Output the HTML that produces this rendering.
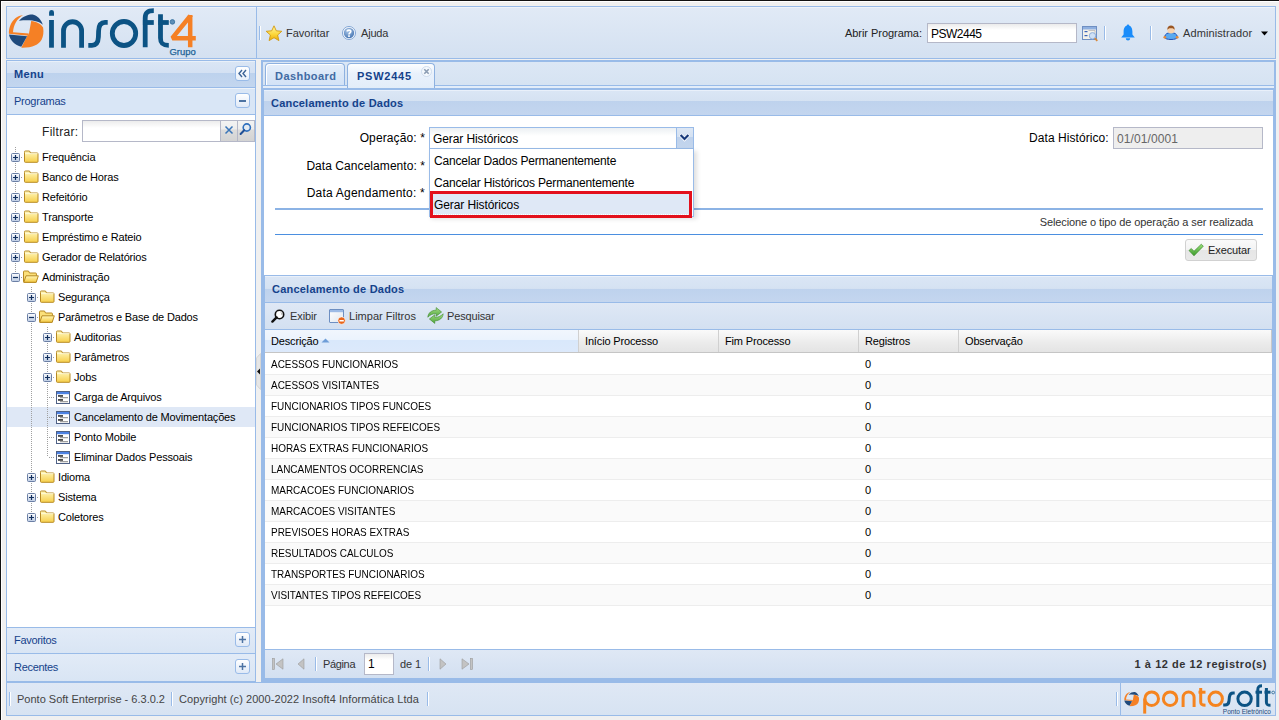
<!DOCTYPE html>
<html><head><meta charset="utf-8">
<style>
*{box-sizing:border-box;margin:0;padding:0}
html,body{width:1279px;height:720px;overflow:hidden;background:#f0f0f0;font-family:"Liberation Sans",sans-serif;font-size:11px;color:#000}
.a{position:absolute}
.t{position:absolute;white-space:nowrap;line-height:1}
.b{font-weight:bold}
#frameTop{left:0;top:0;width:1279px;height:1px;background:#111}
#frameTop2{left:0;top:1px;width:1279px;height:1px;background:#fff}
#frameLeft{left:0;top:0;width:1px;height:720px;background:#111}
#frameLeft2{left:1px;top:1px;width:1px;height:719px;background:#fff}
.hdr{left:6px;top:6px;width:1270px;height:53px;border:1px solid #99bbe8;background:linear-gradient(#e1eaf6,#d4e1f1);box-shadow:inset 0 1px 0 #eef3fa}
.sep{position:absolute;width:1px;background:#99bbe8;border-right:1px solid #fff}
</style></head><body>
<div class="a" id="frameTop"></div><div class="a" id="frameTop2"></div>
<div class="a" id="frameLeft"></div><div class="a" id="frameLeft2"></div>

<!-- HEADER -->
<div class="a hdr"></div>
<div class="a" style="left:256px;top:7px;width:1px;height:51px;background:#99bbe8"></div>
<svg class="a" style="left:6px;top:10px" width="42" height="42" viewBox="0 0 720 720">
<path fill="#1f4a7c" d="M222,185 C300,95 420,70 470,80 C540,95 600,160 632,252 C560,195 450,162 222,185 Z"/>
<path fill="#f58025" d="M432,188 C520,200 590,225 636,300 C650,380 640,450 610,510 C560,600 450,650 262,646 L360,450 L392,412 Z"/>
<path fill="#f58025" d="M292,90 C190,140 128,260 120,382 L392,402 L385,440 L50,408 C45,300 90,200 160,140 C200,110 250,92 292,90 Z"/>
<path fill="#1f4a7c" d="M52,420 L362,452 L262,632 C150,605 70,520 52,420 Z"/>
</svg>
<svg class="a" style="left:0;top:0" width="210" height="60" viewBox="0 0 210 60">
<g fill="none" stroke="#0c5384" stroke-width="4.8">
<path d="M51.5,20 V47.7"/>
<path d="M63.5,47.7 V30.8 A9.05,9.05 0 0 1 81.6,30.8 V47.7"/>
<path d="M107.7,22.4 H105 C100,22.4 98.8,26 98.6,31 L98.4,37 C98.2,42 96.5,45.3 92,45.3 H88.3"/>
<ellipse cx="124" cy="33.5" rx="11.7" ry="12"/>
<path d="M145.2,47.3 V18 C145.2,12 148,10.7 153.8,10.7"/>
<path d="M142.9,22.5 H153.8"/>
<path d="M160.5,14.3 V38 C160.5,43.5 162.5,45.3 168.8,45.3"/>
<path d="M158.3,22.5 H168.8"/>
</g>
<path fill="#0c5384" d="M49.1,12.5 A2.45,2.45 0 0 1 54,12.5 V15.7 H49.1 Z"/>
<g fill="none" stroke="#f58025" stroke-width="4.5" stroke-linejoin="bevel">
<path d="M190.2,47.3 V16 L172.3,38.2 H195.8"/><path d="M187.9,15 H192.5 V17 L188,17 Z" fill="#f58025" stroke="none"/>
</g>
<circle cx="172.4" cy="21.9" r="2.3" fill="#5d8fb8" stroke="#2f6c9c" stroke-width="0.8"/>
<text x="169.5" y="55" font-family="Liberation Sans" font-size="9" fill="#1f6496" stroke="#1f6496" stroke-width="0.25" textLength="26.3" lengthAdjust="spacingAndGlyphs">Grupo</text>
</svg>
<div class="a" style="left:259px;top:26px;width:2px;height:14px;border-left:1px solid #99bbe8;border-right:1px solid #fff"></div>
<svg class="a" style="left:265px;top:25px" width="18" height="17" viewBox="0 0 18 17">
<defs><linearGradient id="sg" x1="0" y1="0" x2="0" y2="1"><stop offset="0" stop-color="#fff7a8"/><stop offset="0.6" stop-color="#fcd535"/><stop offset="1" stop-color="#eaa80e"/></linearGradient></defs>
<path d="M9,0.8 L11.3,5.8 L16.8,6.3 L12.6,10 L13.9,15.6 L9,12.7 L4.1,15.6 L5.4,10 L1.2,6.3 L6.7,5.8 Z" fill="url(#sg)" stroke="#d39a10" stroke-width="0.9" stroke-linejoin="round"/>
</svg>
<div class="t" style="left:286px;top:28px;color:#333;font-size:11px;letter-spacing:0px">Favoritar</div>
<svg class="a" style="left:342px;top:26px" width="14" height="14" viewBox="0 0 14 14">
<defs><radialGradient id="hg" cx="0.4" cy="0.3" r="0.8"><stop offset="0" stop-color="#a9c6e8"/><stop offset="1" stop-color="#3f6fae"/></radialGradient></defs>
<circle cx="7" cy="7" r="6.5" fill="#fff" stroke="#7fa3d3" stroke-width="1"/>
<circle cx="7" cy="7" r="5.2" fill="url(#hg)"/>
<path d="M5.2,5.6 C5.2,3.6 8.8,3.6 8.8,5.6 C8.8,6.9 7,6.9 7,8.4" fill="none" stroke="#fff" stroke-width="1.6"/>
<rect x="6.1" y="9.3" width="1.8" height="1.6" fill="#fff"/>
</svg>
<div class="t" style="left:361px;top:28px;color:#333;font-size:11px;letter-spacing:-0.2px">Ajuda</div>

<div class="t" style="left:845px;top:28px;color:#222;font-size:11px;letter-spacing:-0.05px">Abrir Programa:</div>
<div class="a" style="left:927px;top:23px;width:150px;height:20px;border:1px solid #b5b8c8;background:#fff;background-image:linear-gradient(#ebebeb,#fff 6px)"></div>
<div class="t" style="left:931px;top:28px;color:#000;font-size:12px;letter-spacing:-0.5px">PSW2445</div>
<svg class="a" style="left:1082px;top:26px" width="17" height="16" viewBox="0 0 17 16">
<rect x="0.5" y="0.5" width="14" height="13" fill="#f4f1ea" stroke="#6f8fc2"/>
<rect x="1" y="1" width="13" height="2.5" fill="#8fb0e0"/>
<rect x="2.5" y="5" width="3" height="1.2" fill="#3a63b8"/><rect x="2.5" y="9" width="3" height="1.2" fill="#3a63b8"/>
<path d="M6.5,4.5 H13 V13" fill="none" stroke="#b9b9b9" stroke-width="0.8"/>
<circle cx="10.5" cy="9.8" r="3.2" fill="#cfe0f5" stroke="#8fb0dc" stroke-width="1"/>
<path d="M12.7,12.2 L15.3,14.8" stroke="#d8883a" stroke-width="1.8"/>
</svg>
<div class="a" style="left:1104px;top:26px;width:2px;height:14px;border-left:1px solid #99bbe8;border-right:1px solid #fff"></div>
<svg class="a" style="left:1120px;top:24px" width="16" height="17" viewBox="0 0 16 17">
<path d="M8,1.5 C4.8,1.5 3.6,4.5 3.6,7.5 V10.5 L1.2,13.4 H14.8 L12.4,10.5 V7.5 C12.4,4.5 11.2,1.5 8,1.5 Z" fill="#1a8cfa"/>
<circle cx="8" cy="1.8" r="1.3" fill="#1a8cfa"/>
<path d="M5.8,14.2 A2.2,2.2 0 0 0 10.2,14.2 Z" fill="#1a8cfa"/>
</svg>
<div class="a" style="left:1150px;top:26px;width:2px;height:14px;border-left:1px solid #99bbe8;border-right:1px solid #fff"></div>
<svg class="a" style="left:1163px;top:25px" width="16" height="15" viewBox="0 0 16 15">
<path d="M1.5,12 C2,9 4.5,7.6 8,7.6 C11.5,7.6 14,9 14.5,12 C14,13.8 11.5,14.5 8,14.5 C4.5,14.5 2,13.8 1.5,12 Z" fill="#5aa9f0" stroke="#2451b5" stroke-width="1"/>
<circle cx="1.8" cy="12.3" r="1.4" fill="#e58a3b"/><circle cx="14.2" cy="12.3" r="1.4" fill="#e58a3b"/>
<circle cx="8" cy="5" r="3.6" fill="#f7d3b0"/>
<path d="M4.3,5 C4.2,1.8 6,0.6 8,0.6 C10,0.6 11.8,1.8 11.7,5 C11,3.5 9.5,3 8,3.2 C6.5,3 5,3.5 4.3,5 Z" fill="#9a5624"/>
</svg>
<div class="t" style="left:1183px;top:28px;color:#333;font-size:11px;letter-spacing:0.1px">Administrador</div>
<svg class="a" style="left:1261px;top:31px" width="7" height="5" viewBox="0 0 7 5"><path d="M0,0.5 H7 L3.5,4.5 Z" fill="#000"/></svg>


<!-- MENU PANEL -->
<div class="a" style="left:6px;top:60px;width:250px;height:621px;border:1px solid #99bbe8;background:#fff"></div>
<div class="a" style="left:6px;top:60px;width:250px;height:28px;border:1px solid #99bbe8;background:linear-gradient(#dae6f5 0,#d4e1f3 45%,#bdd2ed 46%,#c3d6ef 100%)"></div>
<div class="a" style="left:7px;top:61px;width:248px;height:1px;background:#e9f0f9"></div>
<div class="t b" style="left:14px;top:69px;color:#15428b;font-size:11px;letter-spacing:0.3px">Menu</div>
<div class="a" style="left:235px;top:66px;width:15px;height:15px;border:1px solid #99bbe8;border-radius:3px;background:linear-gradient(#fff,#e8f0fa)"></div>
<svg class="a" style="left:237px;top:68px" width="11" height="11" viewBox="0 0 11 11"><path d="M5,2 L2,5.5 L5,9 M9,2 L6,5.5 L9,9" fill="none" stroke="#3b6396" stroke-width="1.4"/></svg>
<div class="a" style="left:6px;top:87px;width:250px;height:28px;border:1px solid #99bbe8;background:#d9e6f6"></div>
<div class="a" style="left:7px;top:88px;width:248px;height:1px;background:#eef3fa"></div>
<div class="t" style="left:14px;top:96px;color:#15428b;font-size:11px;letter-spacing:-0.25px">Programas</div>
<div class="a" style="left:235px;top:93px;width:15px;height:15px;border:1px solid #99bbe8;border-radius:3px;background:linear-gradient(#fff,#dfe9f7)"></div>
<div class="a" style="left:239px;top:100px;width:7px;height:2px;background:#4d73a3"></div>
<div class="t" style="left:42px;top:126px;color:#222;font-size:12px;letter-spacing:0.3px">Filtrar:</div>
<div class="a" style="left:82px;top:120px;width:173px;height:22px;border:1px solid #b5b8c8;background:linear-gradient(#ececec,#fff 7px)"></div>
<div class="a" style="left:220px;top:121px;width:17px;height:20px;background:linear-gradient(#f3f3f3 0,#ededed 40%,#dcdcdc 45%,#d3d3d3 100%);border-left:1px solid #b5b8c8"></div>
<div class="a" style="left:237px;top:121px;width:17px;height:20px;background:linear-gradient(#f3f3f3 0,#ededed 40%,#dcdcdc 45%,#d3d3d3 100%);border-left:1px solid #b5b8c8"></div>
<svg class="a" style="left:224px;top:125px" width="10" height="10" viewBox="0 0 10 10"><path d="M1.5,1.5 L8.5,8.5 M8.5,1.5 L1.5,8.5" stroke="#3a75b8" stroke-width="1.5"/></svg>
<svg class="a" style="left:239px;top:122px" width="13" height="14" viewBox="0 0 13 14"><circle cx="7.8" cy="5.5" r="3.6" fill="#e4ebf3" stroke="#2f6fbd" stroke-width="1.6"/><path d="M5.2,8.2 L1.6,12" stroke="#1f4f96" stroke-width="2" stroke-linecap="round"/></svg>
<div class="a" style="left:7px;top:407px;width:248px;height:20px;background:#dfe8f6"></div>
<div class="a" style="left:15px;top:147px;width:1px;height:130px;background:repeating-linear-gradient(#a0a0a0 0 1px,transparent 1px 2px)"></div>
<div class="a" style="left:31px;top:287px;width:1px;height:230px;background:repeating-linear-gradient(#a0a0a0 0 1px,transparent 1px 2px)"></div>
<div class="a" style="left:47px;top:327px;width:1px;height:130px;background:repeating-linear-gradient(#a0a0a0 0 1px,transparent 1px 2px)"></div>
<svg class="a" style="left:11px;top:153px" width="9" height="9" viewBox="0 0 9 9"><defs><linearGradient id="pg0" x1="0" y1="0" x2="0" y2="1"><stop offset="0" stop-color="#fdfeff"/><stop offset="1" stop-color="#bccbe3"/></linearGradient></defs><rect x="0.5" y="0.5" width="8" height="8" rx="1" fill="url(#pg0)" stroke="#6b7fa5"/><path d="M2,4.5 H7 M4.5,2 V7" stroke="#13305e" stroke-width="1.2"/></svg>
<div class="a" style="left:21px;top:157px;width:2px;height:1px;background:repeating-linear-gradient(90deg,#a0a0a0 0 1px,transparent 1px 2px)"></div>
<svg class="a" style="left:24px;top:150px" width="15" height="13" viewBox="0 0 15 13"><defs><linearGradient id="fg0" x1="0" y1="0" x2="0" y2="1"><stop offset="0" stop-color="#fff8c0"/><stop offset="1" stop-color="#f7cf4a"/></linearGradient></defs><path d="M0.5,2.5 V11.5 Q0.5,12.3 1.3,12.3 H13.2 Q14,12.3 14,11.5 V3.8 Q14,3 13.2,3 H6.5 L5.5,1 H1.3 Q0.5,1 0.5,1.8 Z" fill="url(#fg0)" stroke="#b78a24" stroke-width="1"/><path d="M1,3.6 H13.5" stroke="#fffbe0" stroke-width="0.8"/></svg>
<div class="t" style="left:42px;top:152px;color:#000;font-size:11px;letter-spacing:-0.17px">Frequência</div>
<svg class="a" style="left:11px;top:173px" width="9" height="9" viewBox="0 0 9 9"><defs><linearGradient id="pg1" x1="0" y1="0" x2="0" y2="1"><stop offset="0" stop-color="#fdfeff"/><stop offset="1" stop-color="#bccbe3"/></linearGradient></defs><rect x="0.5" y="0.5" width="8" height="8" rx="1" fill="url(#pg1)" stroke="#6b7fa5"/><path d="M2,4.5 H7 M4.5,2 V7" stroke="#13305e" stroke-width="1.2"/></svg>
<div class="a" style="left:21px;top:177px;width:2px;height:1px;background:repeating-linear-gradient(90deg,#a0a0a0 0 1px,transparent 1px 2px)"></div>
<svg class="a" style="left:24px;top:170px" width="15" height="13" viewBox="0 0 15 13"><defs><linearGradient id="fg1" x1="0" y1="0" x2="0" y2="1"><stop offset="0" stop-color="#fff8c0"/><stop offset="1" stop-color="#f7cf4a"/></linearGradient></defs><path d="M0.5,2.5 V11.5 Q0.5,12.3 1.3,12.3 H13.2 Q14,12.3 14,11.5 V3.8 Q14,3 13.2,3 H6.5 L5.5,1 H1.3 Q0.5,1 0.5,1.8 Z" fill="url(#fg1)" stroke="#b78a24" stroke-width="1"/><path d="M1,3.6 H13.5" stroke="#fffbe0" stroke-width="0.8"/></svg>
<div class="t" style="left:42px;top:172px;color:#000;font-size:11px;letter-spacing:-0.17px">Banco de Horas</div>
<svg class="a" style="left:11px;top:193px" width="9" height="9" viewBox="0 0 9 9"><defs><linearGradient id="pg2" x1="0" y1="0" x2="0" y2="1"><stop offset="0" stop-color="#fdfeff"/><stop offset="1" stop-color="#bccbe3"/></linearGradient></defs><rect x="0.5" y="0.5" width="8" height="8" rx="1" fill="url(#pg2)" stroke="#6b7fa5"/><path d="M2,4.5 H7 M4.5,2 V7" stroke="#13305e" stroke-width="1.2"/></svg>
<div class="a" style="left:21px;top:197px;width:2px;height:1px;background:repeating-linear-gradient(90deg,#a0a0a0 0 1px,transparent 1px 2px)"></div>
<svg class="a" style="left:24px;top:190px" width="15" height="13" viewBox="0 0 15 13"><defs><linearGradient id="fg2" x1="0" y1="0" x2="0" y2="1"><stop offset="0" stop-color="#fff8c0"/><stop offset="1" stop-color="#f7cf4a"/></linearGradient></defs><path d="M0.5,2.5 V11.5 Q0.5,12.3 1.3,12.3 H13.2 Q14,12.3 14,11.5 V3.8 Q14,3 13.2,3 H6.5 L5.5,1 H1.3 Q0.5,1 0.5,1.8 Z" fill="url(#fg2)" stroke="#b78a24" stroke-width="1"/><path d="M1,3.6 H13.5" stroke="#fffbe0" stroke-width="0.8"/></svg>
<div class="t" style="left:42px;top:192px;color:#000;font-size:11px;letter-spacing:-0.17px">Refeitório</div>
<svg class="a" style="left:11px;top:213px" width="9" height="9" viewBox="0 0 9 9"><defs><linearGradient id="pg3" x1="0" y1="0" x2="0" y2="1"><stop offset="0" stop-color="#fdfeff"/><stop offset="1" stop-color="#bccbe3"/></linearGradient></defs><rect x="0.5" y="0.5" width="8" height="8" rx="1" fill="url(#pg3)" stroke="#6b7fa5"/><path d="M2,4.5 H7 M4.5,2 V7" stroke="#13305e" stroke-width="1.2"/></svg>
<div class="a" style="left:21px;top:217px;width:2px;height:1px;background:repeating-linear-gradient(90deg,#a0a0a0 0 1px,transparent 1px 2px)"></div>
<svg class="a" style="left:24px;top:210px" width="15" height="13" viewBox="0 0 15 13"><defs><linearGradient id="fg3" x1="0" y1="0" x2="0" y2="1"><stop offset="0" stop-color="#fff8c0"/><stop offset="1" stop-color="#f7cf4a"/></linearGradient></defs><path d="M0.5,2.5 V11.5 Q0.5,12.3 1.3,12.3 H13.2 Q14,12.3 14,11.5 V3.8 Q14,3 13.2,3 H6.5 L5.5,1 H1.3 Q0.5,1 0.5,1.8 Z" fill="url(#fg3)" stroke="#b78a24" stroke-width="1"/><path d="M1,3.6 H13.5" stroke="#fffbe0" stroke-width="0.8"/></svg>
<div class="t" style="left:42px;top:212px;color:#000;font-size:11px;letter-spacing:-0.17px">Transporte</div>
<svg class="a" style="left:11px;top:233px" width="9" height="9" viewBox="0 0 9 9"><defs><linearGradient id="pg4" x1="0" y1="0" x2="0" y2="1"><stop offset="0" stop-color="#fdfeff"/><stop offset="1" stop-color="#bccbe3"/></linearGradient></defs><rect x="0.5" y="0.5" width="8" height="8" rx="1" fill="url(#pg4)" stroke="#6b7fa5"/><path d="M2,4.5 H7 M4.5,2 V7" stroke="#13305e" stroke-width="1.2"/></svg>
<div class="a" style="left:21px;top:237px;width:2px;height:1px;background:repeating-linear-gradient(90deg,#a0a0a0 0 1px,transparent 1px 2px)"></div>
<svg class="a" style="left:24px;top:230px" width="15" height="13" viewBox="0 0 15 13"><defs><linearGradient id="fg4" x1="0" y1="0" x2="0" y2="1"><stop offset="0" stop-color="#fff8c0"/><stop offset="1" stop-color="#f7cf4a"/></linearGradient></defs><path d="M0.5,2.5 V11.5 Q0.5,12.3 1.3,12.3 H13.2 Q14,12.3 14,11.5 V3.8 Q14,3 13.2,3 H6.5 L5.5,1 H1.3 Q0.5,1 0.5,1.8 Z" fill="url(#fg4)" stroke="#b78a24" stroke-width="1"/><path d="M1,3.6 H13.5" stroke="#fffbe0" stroke-width="0.8"/></svg>
<div class="t" style="left:42px;top:232px;color:#000;font-size:11px;letter-spacing:-0.17px">Empréstimo e Rateio</div>
<svg class="a" style="left:11px;top:253px" width="9" height="9" viewBox="0 0 9 9"><defs><linearGradient id="pg5" x1="0" y1="0" x2="0" y2="1"><stop offset="0" stop-color="#fdfeff"/><stop offset="1" stop-color="#bccbe3"/></linearGradient></defs><rect x="0.5" y="0.5" width="8" height="8" rx="1" fill="url(#pg5)" stroke="#6b7fa5"/><path d="M2,4.5 H7 M4.5,2 V7" stroke="#13305e" stroke-width="1.2"/></svg>
<div class="a" style="left:21px;top:257px;width:2px;height:1px;background:repeating-linear-gradient(90deg,#a0a0a0 0 1px,transparent 1px 2px)"></div>
<svg class="a" style="left:24px;top:250px" width="15" height="13" viewBox="0 0 15 13"><defs><linearGradient id="fg5" x1="0" y1="0" x2="0" y2="1"><stop offset="0" stop-color="#fff8c0"/><stop offset="1" stop-color="#f7cf4a"/></linearGradient></defs><path d="M0.5,2.5 V11.5 Q0.5,12.3 1.3,12.3 H13.2 Q14,12.3 14,11.5 V3.8 Q14,3 13.2,3 H6.5 L5.5,1 H1.3 Q0.5,1 0.5,1.8 Z" fill="url(#fg5)" stroke="#b78a24" stroke-width="1"/><path d="M1,3.6 H13.5" stroke="#fffbe0" stroke-width="0.8"/></svg>
<div class="t" style="left:42px;top:252px;color:#000;font-size:11px;letter-spacing:-0.17px">Gerador de Relatórios</div>
<svg class="a" style="left:11px;top:273px" width="9" height="9" viewBox="0 0 9 9"><defs><linearGradient id="pg6" x1="0" y1="0" x2="0" y2="1"><stop offset="0" stop-color="#fdfeff"/><stop offset="1" stop-color="#bccbe3"/></linearGradient></defs><rect x="0.5" y="0.5" width="8" height="8" rx="1" fill="url(#pg6)" stroke="#6b7fa5"/><path d="M2,4.5 H7" stroke="#13305e" stroke-width="1.2"/></svg>
<div class="a" style="left:21px;top:277px;width:2px;height:1px;background:repeating-linear-gradient(90deg,#a0a0a0 0 1px,transparent 1px 2px)"></div>
<svg class="a" style="left:23px;top:270px" width="16" height="13" viewBox="0 0 16 13"><defs><linearGradient id="fo6" x1="0" y1="0" x2="0" y2="1"><stop offset="0" stop-color="#fff6b8"/><stop offset="1" stop-color="#f5c93f"/></linearGradient></defs><path d="M0.5,2 V11.5 Q0.5,12.3 1.3,12.3 H12.6 Q13.4,12.3 13.4,11.5 V3.8 Q13.4,3 12.6,3 H6.5 L5.5,1 H1.3 Q0.5,1 0.5,1.8 Z" fill="#fbe07a" stroke="#b78a24" stroke-width="1"/><path d="M0.8,12.3 L3,5.8 H15.3 L13.2,12.3 Z" fill="url(#fo6)" stroke="#b78a24" stroke-width="1" stroke-linejoin="round"/></svg>
<div class="t" style="left:42px;top:272px;color:#000;font-size:11px;letter-spacing:-0.17px">Administração</div>
<svg class="a" style="left:27px;top:293px" width="9" height="9" viewBox="0 0 9 9"><defs><linearGradient id="pg7" x1="0" y1="0" x2="0" y2="1"><stop offset="0" stop-color="#fdfeff"/><stop offset="1" stop-color="#bccbe3"/></linearGradient></defs><rect x="0.5" y="0.5" width="8" height="8" rx="1" fill="url(#pg7)" stroke="#6b7fa5"/><path d="M2,4.5 H7 M4.5,2 V7" stroke="#13305e" stroke-width="1.2"/></svg>
<div class="a" style="left:37px;top:297px;width:2px;height:1px;background:repeating-linear-gradient(90deg,#a0a0a0 0 1px,transparent 1px 2px)"></div>
<svg class="a" style="left:40px;top:290px" width="15" height="13" viewBox="0 0 15 13"><defs><linearGradient id="fg7" x1="0" y1="0" x2="0" y2="1"><stop offset="0" stop-color="#fff8c0"/><stop offset="1" stop-color="#f7cf4a"/></linearGradient></defs><path d="M0.5,2.5 V11.5 Q0.5,12.3 1.3,12.3 H13.2 Q14,12.3 14,11.5 V3.8 Q14,3 13.2,3 H6.5 L5.5,1 H1.3 Q0.5,1 0.5,1.8 Z" fill="url(#fg7)" stroke="#b78a24" stroke-width="1"/><path d="M1,3.6 H13.5" stroke="#fffbe0" stroke-width="0.8"/></svg>
<div class="t" style="left:58px;top:292px;color:#000;font-size:11px;letter-spacing:-0.17px">Segurança</div>
<svg class="a" style="left:27px;top:313px" width="9" height="9" viewBox="0 0 9 9"><defs><linearGradient id="pg8" x1="0" y1="0" x2="0" y2="1"><stop offset="0" stop-color="#fdfeff"/><stop offset="1" stop-color="#bccbe3"/></linearGradient></defs><rect x="0.5" y="0.5" width="8" height="8" rx="1" fill="url(#pg8)" stroke="#6b7fa5"/><path d="M2,4.5 H7" stroke="#13305e" stroke-width="1.2"/></svg>
<div class="a" style="left:37px;top:317px;width:2px;height:1px;background:repeating-linear-gradient(90deg,#a0a0a0 0 1px,transparent 1px 2px)"></div>
<svg class="a" style="left:39px;top:310px" width="16" height="13" viewBox="0 0 16 13"><defs><linearGradient id="fo8" x1="0" y1="0" x2="0" y2="1"><stop offset="0" stop-color="#fff6b8"/><stop offset="1" stop-color="#f5c93f"/></linearGradient></defs><path d="M0.5,2 V11.5 Q0.5,12.3 1.3,12.3 H12.6 Q13.4,12.3 13.4,11.5 V3.8 Q13.4,3 12.6,3 H6.5 L5.5,1 H1.3 Q0.5,1 0.5,1.8 Z" fill="#fbe07a" stroke="#b78a24" stroke-width="1"/><path d="M0.8,12.3 L3,5.8 H15.3 L13.2,12.3 Z" fill="url(#fo8)" stroke="#b78a24" stroke-width="1" stroke-linejoin="round"/></svg>
<div class="t" style="left:58px;top:312px;color:#000;font-size:11px;letter-spacing:-0.17px">Parâmetros e Base de Dados</div>
<svg class="a" style="left:43px;top:333px" width="9" height="9" viewBox="0 0 9 9"><defs><linearGradient id="pg9" x1="0" y1="0" x2="0" y2="1"><stop offset="0" stop-color="#fdfeff"/><stop offset="1" stop-color="#bccbe3"/></linearGradient></defs><rect x="0.5" y="0.5" width="8" height="8" rx="1" fill="url(#pg9)" stroke="#6b7fa5"/><path d="M2,4.5 H7 M4.5,2 V7" stroke="#13305e" stroke-width="1.2"/></svg>
<div class="a" style="left:53px;top:337px;width:2px;height:1px;background:repeating-linear-gradient(90deg,#a0a0a0 0 1px,transparent 1px 2px)"></div>
<svg class="a" style="left:56px;top:330px" width="15" height="13" viewBox="0 0 15 13"><defs><linearGradient id="fg9" x1="0" y1="0" x2="0" y2="1"><stop offset="0" stop-color="#fff8c0"/><stop offset="1" stop-color="#f7cf4a"/></linearGradient></defs><path d="M0.5,2.5 V11.5 Q0.5,12.3 1.3,12.3 H13.2 Q14,12.3 14,11.5 V3.8 Q14,3 13.2,3 H6.5 L5.5,1 H1.3 Q0.5,1 0.5,1.8 Z" fill="url(#fg9)" stroke="#b78a24" stroke-width="1"/><path d="M1,3.6 H13.5" stroke="#fffbe0" stroke-width="0.8"/></svg>
<div class="t" style="left:74px;top:332px;color:#000;font-size:11px;letter-spacing:-0.17px">Auditorias</div>
<svg class="a" style="left:43px;top:353px" width="9" height="9" viewBox="0 0 9 9"><defs><linearGradient id="pg10" x1="0" y1="0" x2="0" y2="1"><stop offset="0" stop-color="#fdfeff"/><stop offset="1" stop-color="#bccbe3"/></linearGradient></defs><rect x="0.5" y="0.5" width="8" height="8" rx="1" fill="url(#pg10)" stroke="#6b7fa5"/><path d="M2,4.5 H7 M4.5,2 V7" stroke="#13305e" stroke-width="1.2"/></svg>
<div class="a" style="left:53px;top:357px;width:2px;height:1px;background:repeating-linear-gradient(90deg,#a0a0a0 0 1px,transparent 1px 2px)"></div>
<svg class="a" style="left:56px;top:350px" width="15" height="13" viewBox="0 0 15 13"><defs><linearGradient id="fg10" x1="0" y1="0" x2="0" y2="1"><stop offset="0" stop-color="#fff8c0"/><stop offset="1" stop-color="#f7cf4a"/></linearGradient></defs><path d="M0.5,2.5 V11.5 Q0.5,12.3 1.3,12.3 H13.2 Q14,12.3 14,11.5 V3.8 Q14,3 13.2,3 H6.5 L5.5,1 H1.3 Q0.5,1 0.5,1.8 Z" fill="url(#fg10)" stroke="#b78a24" stroke-width="1"/><path d="M1,3.6 H13.5" stroke="#fffbe0" stroke-width="0.8"/></svg>
<div class="t" style="left:74px;top:352px;color:#000;font-size:11px;letter-spacing:-0.17px">Parâmetros</div>
<svg class="a" style="left:43px;top:373px" width="9" height="9" viewBox="0 0 9 9"><defs><linearGradient id="pg11" x1="0" y1="0" x2="0" y2="1"><stop offset="0" stop-color="#fdfeff"/><stop offset="1" stop-color="#bccbe3"/></linearGradient></defs><rect x="0.5" y="0.5" width="8" height="8" rx="1" fill="url(#pg11)" stroke="#6b7fa5"/><path d="M2,4.5 H7 M4.5,2 V7" stroke="#13305e" stroke-width="1.2"/></svg>
<div class="a" style="left:53px;top:377px;width:2px;height:1px;background:repeating-linear-gradient(90deg,#a0a0a0 0 1px,transparent 1px 2px)"></div>
<svg class="a" style="left:56px;top:370px" width="15" height="13" viewBox="0 0 15 13"><defs><linearGradient id="fg11" x1="0" y1="0" x2="0" y2="1"><stop offset="0" stop-color="#fff8c0"/><stop offset="1" stop-color="#f7cf4a"/></linearGradient></defs><path d="M0.5,2.5 V11.5 Q0.5,12.3 1.3,12.3 H13.2 Q14,12.3 14,11.5 V3.8 Q14,3 13.2,3 H6.5 L5.5,1 H1.3 Q0.5,1 0.5,1.8 Z" fill="url(#fg11)" stroke="#b78a24" stroke-width="1"/><path d="M1,3.6 H13.5" stroke="#fffbe0" stroke-width="0.8"/></svg>
<div class="t" style="left:74px;top:372px;color:#000;font-size:11px;letter-spacing:-0.17px">Jobs</div>
<div class="a" style="left:49px;top:397px;width:5px;height:1px;background:repeating-linear-gradient(90deg,#a0a0a0 0 1px,transparent 1px 2px)"></div>
<svg class="a" style="left:56px;top:391px" width="14" height="13" viewBox="0 0 14 13"><rect x="0.5" y="0.5" width="13" height="12" fill="#fff" stroke="#4f6186"/><rect x="1" y="1" width="12" height="2.2" fill="#4d82e3"/><rect x="2" y="4.3" width="5" height="1.3" fill="#000"/><rect x="4" y="6.2" width="8" height="1" fill="#888"/><rect x="2" y="8.3" width="5" height="1.3" fill="#000"/><rect x="4" y="10.2" width="8" height="1" fill="#888"/></svg>
<div class="t" style="left:74px;top:392px;color:#000;font-size:11px;letter-spacing:-0.17px">Carga de Arquivos</div>
<div class="a" style="left:49px;top:417px;width:5px;height:1px;background:repeating-linear-gradient(90deg,#a0a0a0 0 1px,transparent 1px 2px)"></div>
<svg class="a" style="left:56px;top:411px" width="14" height="13" viewBox="0 0 14 13"><rect x="0.5" y="0.5" width="13" height="12" fill="#fff" stroke="#4f6186"/><rect x="1" y="1" width="12" height="2.2" fill="#4d82e3"/><rect x="2" y="4.3" width="5" height="1.3" fill="#000"/><rect x="4" y="6.2" width="8" height="1" fill="#888"/><rect x="2" y="8.3" width="5" height="1.3" fill="#000"/><rect x="4" y="10.2" width="8" height="1" fill="#888"/></svg>
<div class="t" style="left:74px;top:412px;color:#000;font-size:11px;letter-spacing:-0.17px">Cancelamento de Movimentações</div>
<div class="a" style="left:49px;top:437px;width:5px;height:1px;background:repeating-linear-gradient(90deg,#a0a0a0 0 1px,transparent 1px 2px)"></div>
<svg class="a" style="left:56px;top:431px" width="14" height="13" viewBox="0 0 14 13"><rect x="0.5" y="0.5" width="13" height="12" fill="#fff" stroke="#4f6186"/><rect x="1" y="1" width="12" height="2.2" fill="#4d82e3"/><rect x="2" y="4.3" width="5" height="1.3" fill="#000"/><rect x="4" y="6.2" width="8" height="1" fill="#888"/><rect x="2" y="8.3" width="5" height="1.3" fill="#000"/><rect x="4" y="10.2" width="8" height="1" fill="#888"/></svg>
<div class="t" style="left:74px;top:432px;color:#000;font-size:11px;letter-spacing:-0.17px">Ponto Mobile</div>
<div class="a" style="left:49px;top:457px;width:5px;height:1px;background:repeating-linear-gradient(90deg,#a0a0a0 0 1px,transparent 1px 2px)"></div>
<svg class="a" style="left:56px;top:451px" width="14" height="13" viewBox="0 0 14 13"><rect x="0.5" y="0.5" width="13" height="12" fill="#fff" stroke="#4f6186"/><rect x="1" y="1" width="12" height="2.2" fill="#4d82e3"/><rect x="2" y="4.3" width="5" height="1.3" fill="#000"/><rect x="4" y="6.2" width="8" height="1" fill="#888"/><rect x="2" y="8.3" width="5" height="1.3" fill="#000"/><rect x="4" y="10.2" width="8" height="1" fill="#888"/></svg>
<div class="t" style="left:74px;top:452px;color:#000;font-size:11px;letter-spacing:-0.17px">Eliminar Dados Pessoais</div>
<svg class="a" style="left:27px;top:473px" width="9" height="9" viewBox="0 0 9 9"><defs><linearGradient id="pg16" x1="0" y1="0" x2="0" y2="1"><stop offset="0" stop-color="#fdfeff"/><stop offset="1" stop-color="#bccbe3"/></linearGradient></defs><rect x="0.5" y="0.5" width="8" height="8" rx="1" fill="url(#pg16)" stroke="#6b7fa5"/><path d="M2,4.5 H7 M4.5,2 V7" stroke="#13305e" stroke-width="1.2"/></svg>
<div class="a" style="left:37px;top:477px;width:2px;height:1px;background:repeating-linear-gradient(90deg,#a0a0a0 0 1px,transparent 1px 2px)"></div>
<svg class="a" style="left:40px;top:470px" width="15" height="13" viewBox="0 0 15 13"><defs><linearGradient id="fg16" x1="0" y1="0" x2="0" y2="1"><stop offset="0" stop-color="#fff8c0"/><stop offset="1" stop-color="#f7cf4a"/></linearGradient></defs><path d="M0.5,2.5 V11.5 Q0.5,12.3 1.3,12.3 H13.2 Q14,12.3 14,11.5 V3.8 Q14,3 13.2,3 H6.5 L5.5,1 H1.3 Q0.5,1 0.5,1.8 Z" fill="url(#fg16)" stroke="#b78a24" stroke-width="1"/><path d="M1,3.6 H13.5" stroke="#fffbe0" stroke-width="0.8"/></svg>
<div class="t" style="left:58px;top:472px;color:#000;font-size:11px;letter-spacing:-0.17px">Idioma</div>
<svg class="a" style="left:27px;top:493px" width="9" height="9" viewBox="0 0 9 9"><defs><linearGradient id="pg17" x1="0" y1="0" x2="0" y2="1"><stop offset="0" stop-color="#fdfeff"/><stop offset="1" stop-color="#bccbe3"/></linearGradient></defs><rect x="0.5" y="0.5" width="8" height="8" rx="1" fill="url(#pg17)" stroke="#6b7fa5"/><path d="M2,4.5 H7 M4.5,2 V7" stroke="#13305e" stroke-width="1.2"/></svg>
<div class="a" style="left:37px;top:497px;width:2px;height:1px;background:repeating-linear-gradient(90deg,#a0a0a0 0 1px,transparent 1px 2px)"></div>
<svg class="a" style="left:40px;top:490px" width="15" height="13" viewBox="0 0 15 13"><defs><linearGradient id="fg17" x1="0" y1="0" x2="0" y2="1"><stop offset="0" stop-color="#fff8c0"/><stop offset="1" stop-color="#f7cf4a"/></linearGradient></defs><path d="M0.5,2.5 V11.5 Q0.5,12.3 1.3,12.3 H13.2 Q14,12.3 14,11.5 V3.8 Q14,3 13.2,3 H6.5 L5.5,1 H1.3 Q0.5,1 0.5,1.8 Z" fill="url(#fg17)" stroke="#b78a24" stroke-width="1"/><path d="M1,3.6 H13.5" stroke="#fffbe0" stroke-width="0.8"/></svg>
<div class="t" style="left:58px;top:492px;color:#000;font-size:11px;letter-spacing:-0.17px">Sistema</div>
<svg class="a" style="left:27px;top:513px" width="9" height="9" viewBox="0 0 9 9"><defs><linearGradient id="pg18" x1="0" y1="0" x2="0" y2="1"><stop offset="0" stop-color="#fdfeff"/><stop offset="1" stop-color="#bccbe3"/></linearGradient></defs><rect x="0.5" y="0.5" width="8" height="8" rx="1" fill="url(#pg18)" stroke="#6b7fa5"/><path d="M2,4.5 H7 M4.5,2 V7" stroke="#13305e" stroke-width="1.2"/></svg>
<div class="a" style="left:37px;top:517px;width:2px;height:1px;background:repeating-linear-gradient(90deg,#a0a0a0 0 1px,transparent 1px 2px)"></div>
<svg class="a" style="left:40px;top:510px" width="15" height="13" viewBox="0 0 15 13"><defs><linearGradient id="fg18" x1="0" y1="0" x2="0" y2="1"><stop offset="0" stop-color="#fff8c0"/><stop offset="1" stop-color="#f7cf4a"/></linearGradient></defs><path d="M0.5,2.5 V11.5 Q0.5,12.3 1.3,12.3 H13.2 Q14,12.3 14,11.5 V3.8 Q14,3 13.2,3 H6.5 L5.5,1 H1.3 Q0.5,1 0.5,1.8 Z" fill="url(#fg18)" stroke="#b78a24" stroke-width="1"/><path d="M1,3.6 H13.5" stroke="#fffbe0" stroke-width="0.8"/></svg>
<div class="t" style="left:58px;top:512px;color:#000;font-size:11px;letter-spacing:-0.17px">Coletores</div>
<div class="a" style="left:6px;top:627px;width:250px;height:27px;border:1px solid #99bbe8;background:linear-gradient(#e2ebf7,#d9e5f4)"></div>
<div class="t" style="left:14px;top:635px;color:#15428b;font-size:11px;letter-spacing:-0.3px">Favoritos</div>
<div class="a" style="left:235px;top:632px;width:15px;height:15px;border:1px solid #99bbe8;border-radius:3px;background:linear-gradient(#fff,#dfe9f7)"></div>
<svg class="a" style="left:238px;top:635px" width="9" height="9" viewBox="0 0 9 9"><path d="M1,4.5 H8 M4.5,1 V8" stroke="#4d73a3" stroke-width="1.5"/></svg>
<div class="a" style="left:6px;top:653px;width:250px;height:30px;border:1px solid #99bbe8;border-bottom-width:2px;background:linear-gradient(#e2ebf7,#d9e5f4)"></div>
<div class="t" style="left:14px;top:662px;color:#15428b;font-size:11px;letter-spacing:-0.3px">Recentes</div>
<div class="a" style="left:235px;top:659px;width:15px;height:15px;border:1px solid #99bbe8;border-radius:3px;background:linear-gradient(#fff,#dfe9f7)"></div>
<svg class="a" style="left:238px;top:662px" width="9" height="9" viewBox="0 0 9 9"><path d="M1,4.5 H8 M4.5,1 V8" stroke="#4d73a3" stroke-width="1.5"/></svg>

<!-- CENTER PANEL -->
<div class="a" style="left:261px;top:60px;width:1015px;height:623px;background:#99bbe8"></div>
<div class="a" style="left:263px;top:62px;width:1011px;height:23px;background:linear-gradient(#dce7f5,#d6e3f2)"></div>
<div class="a" style="left:263px;top:85px;width:1011px;height:4px;background:#99bbe8"></div>
<div class="a" style="left:263px;top:86px;width:1011px;height:2px;background:#e3edf9"></div>
<div class="a" style="left:265px;top:63px;width:80px;height:22px;border:1px solid #8eb1e0;border-bottom:none;border-radius:4px 4px 0 0;background:linear-gradient(#e6effb,#dae7f8 50%,#d3e2f6);box-shadow:inset 1px 1px 0 #fff"></div>
<div class="t b" style="left:275px;top:71px;color:#416aa3;font-size:11px;letter-spacing:0.45px">Dashboard</div>
<div class="a" style="left:347px;top:63px;width:88px;height:25px;border:1px solid #8eb1e0;border-bottom:none;border-radius:4px 4px 0 0;background:linear-gradient(#fdfeff,#e9f1fc 40%,#e3edf9)"></div>
<div class="t b" style="left:357px;top:71px;color:#15428b;font-size:11px;letter-spacing:0.75px">PSW2445</div>
<svg class="a" style="left:421px;top:66px" width="11" height="11" viewBox="0 0 11 11"><circle cx="5.5" cy="5.5" r="5" fill="#f4f8fd" stroke="#c7d6ea" stroke-width="0.8"/><path d="M3.3,3.3 L7.7,7.7 M7.7,3.3 L3.3,7.7" stroke="#8b9cb3" stroke-width="1.6"/></svg>
<div class="a" style="left:264px;top:90px;width:1009px;height:26px;background:linear-gradient(#dbe6f5 0,#d5e2f2 42%,#bed2ed 43%,#c4d6ef 100%)"></div>
<div class="a" style="left:264px;top:90px;width:1009px;height:1px;background:#e9f0fa"></div>
<div class="a" style="left:264px;top:115px;width:1009px;height:1px;background:#99bbe8"></div>
<div class="t b" style="left:271px;top:98px;color:#15428b;font-size:11px;letter-spacing:0.22px">Cancelamento de Dados</div>
<div class="a" style="left:264px;top:116px;width:1009px;height:159px;background:#fff"></div>
<div class="t" style="left:297px;top:132px;width:128px;text-align:right;color:#000;font-size:12px;letter-spacing:0.12px">Operação: *</div>
<div class="t" style="left:297px;top:160px;width:128px;text-align:right;color:#000;font-size:12px;letter-spacing:0.06px">Data Cancelamento: *</div>
<div class="t" style="left:297px;top:187px;width:128px;text-align:right;color:#000;font-size:12px;letter-spacing:0.22px">Data Agendamento: *</div>
<div class="a" style="left:429px;top:127px;width:265px;height:22px;border:1px solid #99bbe8;background:linear-gradient(#ecf0f3,#fff 8px)"></div>
<div class="a" style="left:676px;top:128px;width:17px;height:20px;border-left:1px solid #99bbe8;background:linear-gradient(#dde7f4 0,#d4e1f2 45%,#bfd2ec 46%,#c3d5ed 100%)"></div>
<svg class="a" style="left:679px;top:133px" width="11" height="9" viewBox="0 0 11 9"><path d="M1.2,1.6 L5.5,6.2 L9.8,1.6" fill="none" stroke="#fff" stroke-width="3.4"/><path d="M1.6,2 L5.5,6 L9.4,2" fill="none" stroke="#16387a" stroke-width="2.2"/></svg>
<div class="t" style="left:433px;top:133px;color:#000;font-size:12px;letter-spacing:-0.1px">Gerar Históricos</div>
<div class="t" style="left:1029px;top:132px;color:#000;font-size:12px;letter-spacing:0.07px">Data Histórico:</div>
<div class="a" style="left:1113px;top:127px;width:150px;height:22px;border:1px solid #b5b8c8;background:#eeeeee"></div>
<div class="t" style="left:1117px;top:133px;color:#666;font-size:12px;letter-spacing:0.1px">01/01/0001</div>
<div class="a" style="left:275px;top:208px;width:988px;height:2px;background:#8cb3e5"></div>
<div class="a" style="left:275px;top:234px;width:988px;height:1px;background:#4b8fe0"></div>
<div class="t" style="left:900px;top:217px;width:353px;text-align:right;color:#333;font-size:11px;letter-spacing:-0.1px">Selecione o tipo de operação a ser realizada</div>
<div class="a" style="left:1185px;top:239px;width:72px;height:22px;border:1px solid #d1d1d1;border-radius:3px;background:linear-gradient(#fafafa 0,#f3f3f3 50%,#e6e6e6 51%,#e9e9e9 100%)"></div>
<svg class="a" style="left:1188px;top:243px" width="16" height="14" viewBox="0 0 16 14"><defs><linearGradient id="ck" x1="0" y1="0" x2="0" y2="1"><stop offset="0" stop-color="#9be07a"/><stop offset="1" stop-color="#3a9a2a"/></linearGradient></defs><path d="M1,7.5 L3.3,5.5 L6,8.3 L13.3,1.2 L15.3,3.2 L6,12.8 Z" fill="url(#ck)" stroke="#3d8b2e" stroke-width="0.7" stroke-linejoin="round"/></svg>
<div class="t" style="left:1208px;top:245px;color:#222;font-size:11px;letter-spacing:-0.1px">Executar</div>
<div class="a" style="left:264px;top:275px;width:1008px;height:1px;background:#99bbe8"></div>
<div class="a" style="left:265px;top:276px;width:1007px;height:26px;background:linear-gradient(#dbe6f5 0,#d5e2f2 48%,#bed2ed 49%,#c4d6ef 100%)"></div>
<div class="a" style="left:265px;top:276px;width:1007px;height:1px;background:#e9f0fa"></div>
<div class="t b" style="left:272px;top:284px;color:#15428b;font-size:11px;letter-spacing:0.22px">Cancelamento de Dados</div>
<div class="a" style="left:265px;top:302px;width:1007px;height:1px;background:#99bbe8"></div>
<div class="a" style="left:265px;top:303px;width:1007px;height:26px;background:linear-gradient(#dfe8f5,#d3e0f1)"></div>
<div class="a" style="left:265px;top:329px;width:1007px;height:1px;background:#99bbe8"></div>
<svg class="a" style="left:271px;top:309px" width="14" height="14" viewBox="0 0 14 14"><circle cx="8.5" cy="5.5" r="4.2" fill="#fff" stroke="#111" stroke-width="1.6"/><path d="M10,3.5 A2.5,2.5 0 0 1 11,5.8" stroke="#777" stroke-width="0.8" fill="none"/><path d="M5.6,8.4 L1.4,12.6" stroke="#111" stroke-width="2.4" stroke-linecap="round"/></svg>
<div class="t" style="left:290px;top:311px;color:#333;font-size:11px;letter-spacing:-0.1px">Exibir</div>
<svg class="a" style="left:329px;top:309px" width="17" height="16" viewBox="0 0 17 16"><defs><linearGradient id="lw" x1="0" y1="0" x2="1" y2="1"><stop offset="0" stop-color="#fff"/><stop offset="1" stop-color="#dfe6ef"/></linearGradient></defs><rect x="0.5" y="0.5" width="14" height="13" rx="0.5" fill="url(#lw)" stroke="#6d8fc2"/><rect x="1" y="1" width="13" height="2.2" fill="#9dbbe6"/><circle cx="12.6" cy="11.6" r="3.7" fill="#e9661c" stroke="#fff" stroke-width="0.6"/><rect x="10.4" y="11" width="4.4" height="1.5" fill="#fff"/></svg>
<div class="t" style="left:349px;top:311px;color:#333;font-size:11px;letter-spacing:0.02px">Limpar Filtros</div>
<svg class="a" style="left:427px;top:307px" width="17" height="17" viewBox="0 0 17 17"><defs><linearGradient id="rg1" x1="0" y1="0" x2="0" y2="1"><stop offset="0" stop-color="#a6dc86"/><stop offset="1" stop-color="#4ea73a"/></linearGradient></defs><path d="M0.8,10.2 C1.2,5.8 4.5,3.2 9.2,3.2 L9.2,0.6 L14.6,5 L9.2,9.2 L9.2,6.6 C5.8,6.6 3.2,7.8 0.8,10.2 Z" fill="url(#rg1)" stroke="#3f8a2e" stroke-width="0.6" stroke-linejoin="round"/><path d="M16.2,6.8 C15.8,11.2 12.5,13.8 7.8,13.8 L7.8,16.4 L2.4,12 L7.8,7.8 L7.8,10.4 C11.2,10.4 13.8,9.2 16.2,6.8 Z" fill="url(#rg1)" stroke="#3f8a2e" stroke-width="0.6" stroke-linejoin="round"/></svg>
<div class="t" style="left:447px;top:311px;color:#333;font-size:11px;letter-spacing:-0.15px">Pesquisar</div>
<div class="a" style="left:265px;top:330px;width:1007px;height:22px;background:linear-gradient(#fafafa,#ebebeb 60%,#e4e4e4)"></div>
<div class="a" style="left:265px;top:330px;width:313px;height:22px;background:linear-gradient(#f1f6fd 0,#ebf3fd 45%,#d9e8fb 46%,#dce9fb 100%)"></div>
<div class="a" style="left:265px;top:352px;width:1007px;height:1px;background:#c5c5c5"></div>
<div class="t" style="left:271px;top:336px;color:#000;font-size:11px;letter-spacing:-0.15px">Descrição</div>
<div class="a" style="left:578px;top:330px;width:1px;height:22px;background:#d0d0d0"></div>
<div class="t" style="left:585px;top:336px;color:#000;font-size:11px;letter-spacing:-0.15px">Início Processo</div>
<div class="a" style="left:718px;top:330px;width:1px;height:22px;background:#d0d0d0"></div>
<div class="t" style="left:725px;top:336px;color:#000;font-size:11px;letter-spacing:-0.15px">Fim Processo</div>
<div class="a" style="left:858px;top:330px;width:1px;height:22px;background:#d0d0d0"></div>
<div class="t" style="left:865px;top:336px;color:#000;font-size:11px;letter-spacing:-0.15px">Registros</div>
<div class="a" style="left:958px;top:330px;width:1px;height:22px;background:#d0d0d0"></div>
<div class="t" style="left:965px;top:336px;color:#000;font-size:11px;letter-spacing:-0.15px">Observação</div>
<div class="a" style="left:1271px;top:330px;width:1px;height:22px;background:#c8c8c8"></div>
<svg class="a" style="left:321px;top:338px" width="9" height="5" viewBox="0 0 9 5"><path d="M0.5,4.5 L4.5,0.5 L8.5,4.5 Z" fill="#6e9dd8"/></svg>
<div class="a" style="left:265px;top:353px;width:1007px;height:296px;background:#fff"></div>
<div class="a" style="left:265px;top:375px;width:1007px;height:20px;background:#fafafa"></div>
<div class="a" style="left:265px;top:417px;width:1007px;height:20px;background:#fafafa"></div>
<div class="a" style="left:265px;top:459px;width:1007px;height:20px;background:#fafafa"></div>
<div class="a" style="left:265px;top:501px;width:1007px;height:20px;background:#fafafa"></div>
<div class="a" style="left:265px;top:543px;width:1007px;height:20px;background:#fafafa"></div>
<div class="a" style="left:265px;top:585px;width:1007px;height:20px;background:#fafafa"></div>
<div class="a" style="left:265px;top:374px;width:1007px;height:1px;background:#ededed"></div>
<div class="t" style="left:271px;top:359px;color:#000;font-size:11px;transform:scaleX(0.905);transform-origin:0 0">ACESSOS FUNCIONARIOS</div>
<div class="t" style="left:865px;top:359px;color:#000;font-size:11px">0</div>
<div class="a" style="left:265px;top:395px;width:1007px;height:1px;background:#ededed"></div>
<div class="t" style="left:271px;top:380px;color:#000;font-size:11px;transform:scaleX(0.905);transform-origin:0 0">ACESSOS VISITANTES</div>
<div class="t" style="left:865px;top:380px;color:#000;font-size:11px">0</div>
<div class="a" style="left:265px;top:416px;width:1007px;height:1px;background:#ededed"></div>
<div class="t" style="left:271px;top:401px;color:#000;font-size:11px;transform:scaleX(0.905);transform-origin:0 0">FUNCIONARIOS TIPOS FUNCOES</div>
<div class="t" style="left:865px;top:401px;color:#000;font-size:11px">0</div>
<div class="a" style="left:265px;top:437px;width:1007px;height:1px;background:#ededed"></div>
<div class="t" style="left:271px;top:422px;color:#000;font-size:11px;transform:scaleX(0.905);transform-origin:0 0">FUNCIONARIOS TIPOS REFEICOES</div>
<div class="t" style="left:865px;top:422px;color:#000;font-size:11px">0</div>
<div class="a" style="left:265px;top:458px;width:1007px;height:1px;background:#ededed"></div>
<div class="t" style="left:271px;top:443px;color:#000;font-size:11px;transform:scaleX(0.905);transform-origin:0 0">HORAS EXTRAS FUNCIONARIOS</div>
<div class="t" style="left:865px;top:443px;color:#000;font-size:11px">0</div>
<div class="a" style="left:265px;top:479px;width:1007px;height:1px;background:#ededed"></div>
<div class="t" style="left:271px;top:464px;color:#000;font-size:11px;transform:scaleX(0.905);transform-origin:0 0">LANCAMENTOS OCORRENCIAS</div>
<div class="t" style="left:865px;top:464px;color:#000;font-size:11px">0</div>
<div class="a" style="left:265px;top:500px;width:1007px;height:1px;background:#ededed"></div>
<div class="t" style="left:271px;top:485px;color:#000;font-size:11px;transform:scaleX(0.905);transform-origin:0 0">MARCACOES FUNCIONARIOS</div>
<div class="t" style="left:865px;top:485px;color:#000;font-size:11px">0</div>
<div class="a" style="left:265px;top:521px;width:1007px;height:1px;background:#ededed"></div>
<div class="t" style="left:271px;top:506px;color:#000;font-size:11px;transform:scaleX(0.905);transform-origin:0 0">MARCACOES VISITANTES</div>
<div class="t" style="left:865px;top:506px;color:#000;font-size:11px">0</div>
<div class="a" style="left:265px;top:542px;width:1007px;height:1px;background:#ededed"></div>
<div class="t" style="left:271px;top:527px;color:#000;font-size:11px;transform:scaleX(0.905);transform-origin:0 0">PREVISOES HORAS EXTRAS</div>
<div class="t" style="left:865px;top:527px;color:#000;font-size:11px">0</div>
<div class="a" style="left:265px;top:563px;width:1007px;height:1px;background:#ededed"></div>
<div class="t" style="left:271px;top:548px;color:#000;font-size:11px;transform:scaleX(0.905);transform-origin:0 0">RESULTADOS CALCULOS</div>
<div class="t" style="left:865px;top:548px;color:#000;font-size:11px">0</div>
<div class="a" style="left:265px;top:584px;width:1007px;height:1px;background:#ededed"></div>
<div class="t" style="left:271px;top:569px;color:#000;font-size:11px;transform:scaleX(0.905);transform-origin:0 0">TRANSPORTES FUNCIONARIOS</div>
<div class="t" style="left:865px;top:569px;color:#000;font-size:11px">0</div>
<div class="a" style="left:265px;top:605px;width:1007px;height:1px;background:#ededed"></div>
<div class="t" style="left:271px;top:590px;color:#000;font-size:11px;transform:scaleX(0.905);transform-origin:0 0">VISITANTES TIPOS REFEICOES</div>
<div class="t" style="left:865px;top:590px;color:#000;font-size:11px">0</div>
<div class="a" style="left:265px;top:649px;width:1007px;height:1px;background:#99bbe8"></div>
<div class="a" style="left:265px;top:650px;width:1007px;height:28px;background:linear-gradient(#dfe8f5,#d3e0f1)"></div>
<svg class="a" style="left:272px;top:658px" width="12" height="12" viewBox="0 0 12 12"><rect x="0.5" y="0.5" width="2" height="11" fill="#c3c3c3" stroke="#9a9a9a" stroke-width="0.6"/><path d="M11,0.8 L4,6 L11,11.2 Z" fill="#c3c3c3" stroke="#9a9a9a" stroke-width="0.6"/></svg>
<svg class="a" style="left:297px;top:658px" width="8" height="12" viewBox="0 0 8 12"><path d="M7,0.8 L1,6 L7,11.2 Z" fill="#c3c3c3" stroke="#9a9a9a" stroke-width="0.6"/></svg>
<div class="a" style="left:315px;top:657px;width:2px;height:14px;border-left:1px solid #99bbe8;border-right:1px solid #fff"></div>
<div class="t" style="left:323px;top:659px;color:#333;font-size:11px;letter-spacing:-0.35px">Página</div>
<div class="a" style="left:364px;top:653px;width:30px;height:22px;border:1px solid #b5b8c8;background:linear-gradient(#ececec,#fff 6px)"></div>
<div class="t" style="left:368px;top:658px;color:#000;font-size:12px">1</div>
<div class="t" style="left:400px;top:659px;color:#333;font-size:11px;letter-spacing:-0.1px">de 1</div>
<div class="a" style="left:428px;top:657px;width:2px;height:14px;border-left:1px solid #99bbe8;border-right:1px solid #fff"></div>
<svg class="a" style="left:439px;top:658px" width="8" height="12" viewBox="0 0 8 12"><path d="M1,0.8 L7,6 L1,11.2 Z" fill="#c3c3c3" stroke="#9a9a9a" stroke-width="0.6"/></svg>
<svg class="a" style="left:461px;top:658px" width="12" height="12" viewBox="0 0 12 12"><path d="M1,0.8 L8,6 L1,11.2 Z" fill="#c3c3c3" stroke="#9a9a9a" stroke-width="0.6"/><rect x="9.5" y="0.5" width="2" height="11" fill="#c3c3c3" stroke="#9a9a9a" stroke-width="0.6"/></svg>
<div class="t b" style="left:1102px;top:659px;width:165px;text-align:right;color:#333;font-size:11px;letter-spacing:0.55px">1 à 12 de 12 registro(s)</div>

<div class="a" style="left:431px;top:151px;width:266px;height:68px;background:rgba(0,0,0,0.12);filter:blur(2px)"></div>
<div class="a" style="left:429px;top:149px;width:265px;height:68px;border:1px solid #99bbe8;border-top:none;background:#fff"></div>
<div class="t" style="left:434px;top:155px;color:#000;font-size:12px;letter-spacing:-0.2px">Cancelar Dados Permanentemente</div>
<div class="t" style="left:434px;top:177px;color:#000;font-size:12px;letter-spacing:-0.17px">Cancelar Históricos Permanentemente</div>
<div class="a" style="left:430px;top:191px;width:262px;height:27px;border:3px solid #e3101c;background:#dfe8f6"></div>
<div class="a" style="left:433px;top:214px;width:256px;height:1px;background:repeating-linear-gradient(90deg,#fff 0 1px,transparent 1px 2px)"></div>
<div class="t" style="left:434px;top:199px;color:#000;font-size:12px;letter-spacing:-0.1px">Gerar Históricos</div>
<svg class="a" style="left:255px;top:353px" width="6" height="37" viewBox="0 0 6 37"><path d="M5.5,0.5 L1.5,5 V32 L5.5,36.5 Z" fill="#e6e6e6" stroke="#cfcfcf" stroke-width="0.8"/><path d="M5,15.5 L2,18.5 L5,21.5 Z" fill="#111"/></svg>

<!-- FOOTER -->
<div class="a" style="left:6px;top:682px;width:1270px;height:34px;border:1px solid #99bbe8;background:linear-gradient(#dfe8f5,#d7e3f2)"></div>
<div class="a" style="left:9px;top:692px;width:2px;height:14px;border-left:1px solid #99bbe8;border-right:1px solid #fff"></div>
<div class="t" style="left:17px;top:694px;color:#444;font-size:11px">Ponto Soft Enterprise - 6.3.0.2</div>
<div class="a" style="left:171px;top:692px;width:2px;height:14px;border-left:1px solid #99bbe8;border-right:1px solid #fff"></div>
<div class="t" style="left:179px;top:694px;color:#444;font-size:11px;letter-spacing:0.07px">Copyright (c) 2000-2022 Insoft4 Informática Ltda</div>
<div class="a" style="left:427px;top:692px;width:2px;height:14px;border-left:1px solid #99bbe8;border-right:1px solid #fff"></div>
<div class="a" style="left:1116px;top:692px;width:2px;height:14px;border-left:1px solid #99bbe8;border-right:1px solid #fff"></div>
<div class="a" style="left:1120px;top:682px;width:156px;height:34px;border:1px solid #99bbe8;background:linear-gradient(#dfe8f5,#d7e3f2)"></div>
<svg class="a" style="left:1123px;top:690px" width="18" height="18" viewBox="0 0 720 720">
<path fill="#1f4a7c" d="M222,185 C300,95 420,70 470,80 C540,95 600,160 632,252 C560,195 450,162 222,185 Z"/>
<path fill="#f58025" d="M432,188 C520,200 590,225 636,300 C650,380 640,450 610,510 C560,600 450,650 262,646 L360,450 L392,412 Z"/>
<path fill="#f58025" d="M292,90 C190,140 128,260 120,382 L392,402 L385,440 L50,408 C45,300 90,200 160,140 C200,110 250,92 292,90 Z"/>
<path fill="#1f4a7c" d="M52,420 L362,452 L262,632 C150,605 70,520 52,420 Z"/>
</svg>
<svg class="a" style="left:1120px;top:680px" width="159" height="40" viewBox="1120 680 159 40">
<g fill="none" stroke="#f5841f" stroke-width="3">
<path d="M1144.7,698.7 V713.6"/>
<ellipse cx="1151.7" cy="698.7" rx="6.8" ry="6.8"/>
<ellipse cx="1170.1" cy="698.7" rx="6.75" ry="6.8"/>
<path d="M1183.1,707 V697.4 A5.5,5.5 0 0 1 1194.1,697.4 V707"/>
<path d="M1200.7,688 V702 C1200.7,704.8 1202,705.2 1205.5,705.2"/>
<path d="M1198.5,692.2 H1205.5"/>
<ellipse cx="1215.7" cy="698.8" rx="6.7" ry="6.8"/>
</g>
<g fill="none" stroke="#0c5384" stroke-width="3">
<path d="M1234.7,692.9 H1233 C1230.5,692.9 1229.7,694.5 1229.4,697 L1229,701 C1228.7,703.8 1227.5,705.1 1225,705.1 H1223.2"/>
<ellipse cx="1244.6" cy="698.8" rx="6.7" ry="6.8"/>
<path d="M1257.8,707 V690 C1257.8,686.5 1259,685.8 1262,685.8"/>
<path d="M1255.5,692.2 H1262"/>
<path d="M1266.4,688 V702 C1266.4,704.8 1267.5,705.2 1270.5,705.2"/>
<path d="M1264.5,692.2 H1270.5"/>
</g>
<circle cx="1273.2" cy="692.5" r="1.4" fill="none" stroke="#0c5384" stroke-width="0.7"/>
<text x="1222.8" y="713.6" font-family="Liberation Sans" font-size="6.4" fill="#1d4a7a" textLength="48" lengthAdjust="spacingAndGlyphs">Ponto Eletrônico</text>
</svg>

</body></html>
